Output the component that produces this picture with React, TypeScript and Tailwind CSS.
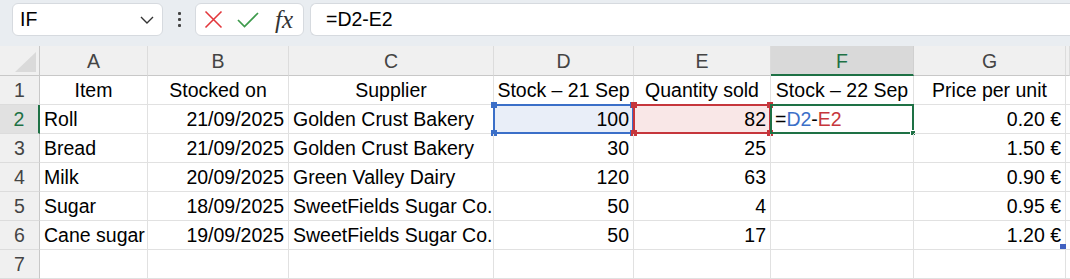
import React from 'react';

const font = { fontFamily: '"Liberation Sans", Arial, sans-serif' };

const COLS = 'grid grid-cols-[40px_108px_141px_205px_140px_137px_143px_152px_1fr]';

type Row = {
  item: string;
  date: string;
  supplier: string;
  stock: string;
  sold: string;
  price: string;
};

const rows: Row[] = [
  { item: 'Roll', date: '21/09/2025', supplier: 'Golden Crust Bakery', stock: '100', sold: '82', price: '0.20 €' },
  { item: 'Bread', date: '21/09/2025', supplier: 'Golden Crust Bakery', stock: '30', sold: '25', price: '1.50 €' },
  { item: 'Milk', date: '20/09/2025', supplier: 'Green Valley Dairy', stock: '120', sold: '63', price: '0.90 €' },
  { item: 'Sugar', date: '18/09/2025', supplier: 'SweetFields Sugar Co.', stock: '50', sold: '4', price: '0.95 €' },
  { item: 'Cane sugar', date: '19/09/2025', supplier: 'SweetFields Sugar Co.', stock: '50', sold: '17', price: '1.20 €' },
];

const cell = 'h-[29px] border-r border-b border-[#e1e1e1] flex items-center pt-[2px] px-[4px] whitespace-nowrap overflow-visible relative';

// range highlight drawn over a cell (formula reference)
const RefBox: React.FC<{ color: string; bg: string }> = ({ color, bg }) => (
  <div className="absolute -left-px -top-px -right-px -bottom-px pointer-events-none">
    <div className="absolute inset-0 border-2" style={{ borderColor: color, background: bg }} />
    <span className="absolute -left-[2px] -top-[2px] w-[6px] h-[6px]" style={{ background: color }} />
    <span className="absolute -right-[2px] -top-[2px] w-[6px] h-[6px]" style={{ background: color }} />
    <span className="absolute -left-[2px] -bottom-[2px] w-[6px] h-[6px]" style={{ background: color }} />
    <span className="absolute -right-[2px] -bottom-[2px] w-[6px] h-[6px]" style={{ background: color }} />
  </div>
);

export default function App() {
  return (
    <div className="w-[1070px] h-[279px] overflow-hidden bg-white text-black" style={font}>
      {/* formula bar */}
      <div className="h-[46px] bg-[#e9edf1] flex items-start pt-[3px] pl-[12px]">
        <div className="w-[151px] h-[33px] bg-white rounded-[6px] border border-[#d6dadf] flex items-center justify-between pl-[7px] pr-[8px]">
          <span className="text-[19.5px] leading-none">IF</span>
          <svg width="14" height="8" viewBox="0 0 14 8" fill="none">
            <path d="M1 1l6 6 6-6" stroke="#333" strokeWidth="1.4" />
          </svg>
        </div>
        <div className="w-[32px] h-[33px] flex flex-col items-center justify-center gap-[3px]">
          <span className="w-[3px] h-[3px] rounded-[1px] bg-[#444]" />
          <span className="w-[3px] h-[3px] rounded-[1px] bg-[#444]" />
          <span className="w-[3px] h-[3px] rounded-[1px] bg-[#444]" />
        </div>
        <div className="w-[109px] h-[33px] bg-white rounded-[6px] border border-[#d6dadf] flex items-center pl-[8px]">
          <svg width="19" height="19" viewBox="0 0 19 19" fill="none">
            <path d="M1.5 1.5l16 16M17.5 1.5l-16 16" stroke="#e2373c" strokeWidth="1.6" />
          </svg>
          <svg className="ml-[14px]" width="22" height="16" viewBox="0 0 22 16" fill="none">
            <path d="M1 8l6.5 6.5L21 1" stroke="#3d9a4b" strokeWidth="1.7" />
          </svg>
          <span className="ml-[16px] text-[25px] italic leading-none text-[#333]" style={{ fontFamily: '"Liberation Serif", "Times New Roman", serif' }}>
            fx
          </span>
        </div>
        <div className="ml-[6px] flex-1 h-[33px] bg-white rounded-l-[6px] border border-r-0 border-[#d6dadf] flex items-center pl-[15px]">
          <span className="text-[19.5px] leading-none">=D2-E2</span>
        </div>
      </div>

      {/* sheet */}
      <div className="text-[19.5px] leading-none">
        {/* column headers */}
        <div className={`${COLS} h-[30px] bg-[#f0f0f0] text-[#444]`}>
          <div className="relative border-r border-b border-[#c8c8c8]">
            <svg className="absolute right-[3px] bottom-[3px]" width="21" height="20" viewBox="0 0 21 20">
              <path d="M21 0V20H0Z" fill="#dadada" />
            </svg>
          </div>
          {['A', 'B', 'C', 'D', 'E', 'F', 'G', ''].map((c) =>
            c === 'F' ? (
              <div key={c} className="flex items-center justify-center pt-[3px] bg-[#d9d9d9] text-[#1e7145] border-r border-[#d0d0d0] border-b-2 border-b-[#1e7145]">
                {c}
              </div>
            ) : (
              <div key={c || 'h'} className="flex items-center justify-center pt-[2px] border-r border-[#dcdcdc] border-b border-b-[#c8c8c8]">
                {c}
              </div>
            )
          )}
        </div>

        {/* row 1: titles */}
        <div className={COLS}>
          <div className="h-[29px] pt-[2px] bg-[#f0f0f0] text-[#444] border-r border-[#c8c8c8] border-b border-b-[#dcdcdc] flex items-center justify-center">1</div>
          <div className={`${cell} justify-center`}>Item</div>
          <div className={`${cell} justify-center`}>Stocked on</div>
          <div className={`${cell} justify-center`}>Supplier</div>
          <div className={`${cell} justify-center`}>Stock – 21 Sep</div>
          <div className={`${cell} justify-center`}>Quantity sold</div>
          <div className={`${cell} justify-center`}>Stock – 22 Sep</div>
          <div className={`${cell} justify-center`}>Price per unit</div>
          <div className={cell} />
        </div>

        {rows.map((r, i) => {
          const n = i + 2;
          const active = n === 2;
          return (
            <div key={n} className={COLS}>
              {active ? (
                <div className="h-[29px] pt-[2px] bg-[#e1e1e1] text-[#1e7145] border-r-2 border-[#1e7145] border-b border-b-[#dcdcdc] flex items-center justify-center">{n}</div>
              ) : (
                <div className="h-[29px] pt-[2px] bg-[#f0f0f0] text-[#444] border-r border-[#c8c8c8] border-b border-b-[#dcdcdc] flex items-center justify-center">{n}</div>
              )}
              <div className={cell}>{r.item}</div>
              <div className={`${cell} justify-end`}>{r.date}</div>
              <div className={cell}>{r.supplier}</div>
              <div className={`${cell} justify-end`}>
                {active && <RefBox color="#3b6fc8" bg="#e9eef8" />}
                <span className="relative">{r.stock}</span>
              </div>
              <div className={`${cell} justify-end`}>
                {active && <RefBox color="#c6363c" bg="#f9e7e7" />}
                <span className="relative">{r.sold}</span>
              </div>
              <div className={cell}>
                {active && (
                  <>
                    <div className="absolute -left-px -top-px -right-px -bottom-px border-2 border-[#1e7145] pointer-events-none" />
                    <span className="absolute -right-[3px] -bottom-[3px] w-[6px] h-[6px] bg-[#1e7145] border border-white" />
                    <span className="relative">
                      =<span className="text-[#3b6fc8]">D2</span>-<span className="text-[#c6363c]">E2</span>
                    </span>
                  </>
                )}
              </div>
              <div className={`${cell} justify-end`}>
                {r.price}
                {n === 6 && <span className="absolute -right-px bottom-[0px] w-[6px] h-[5px] bg-[#4060c0]" />}
              </div>
              <div className={cell} />
            </div>
          );
        })}

        {/* row 7: empty */}
        <div className={COLS}>
          <div className="h-[29px] pt-[2px] bg-[#f0f0f0] text-[#444] border-r border-[#c8c8c8] border-b border-b-[#dcdcdc] flex items-center justify-center">7</div>
          {Array.from({ length: 8 }).map((_, k) => (
            <div key={k} className={cell} />
          ))}
        </div>
      </div>
    </div>
  );
}
